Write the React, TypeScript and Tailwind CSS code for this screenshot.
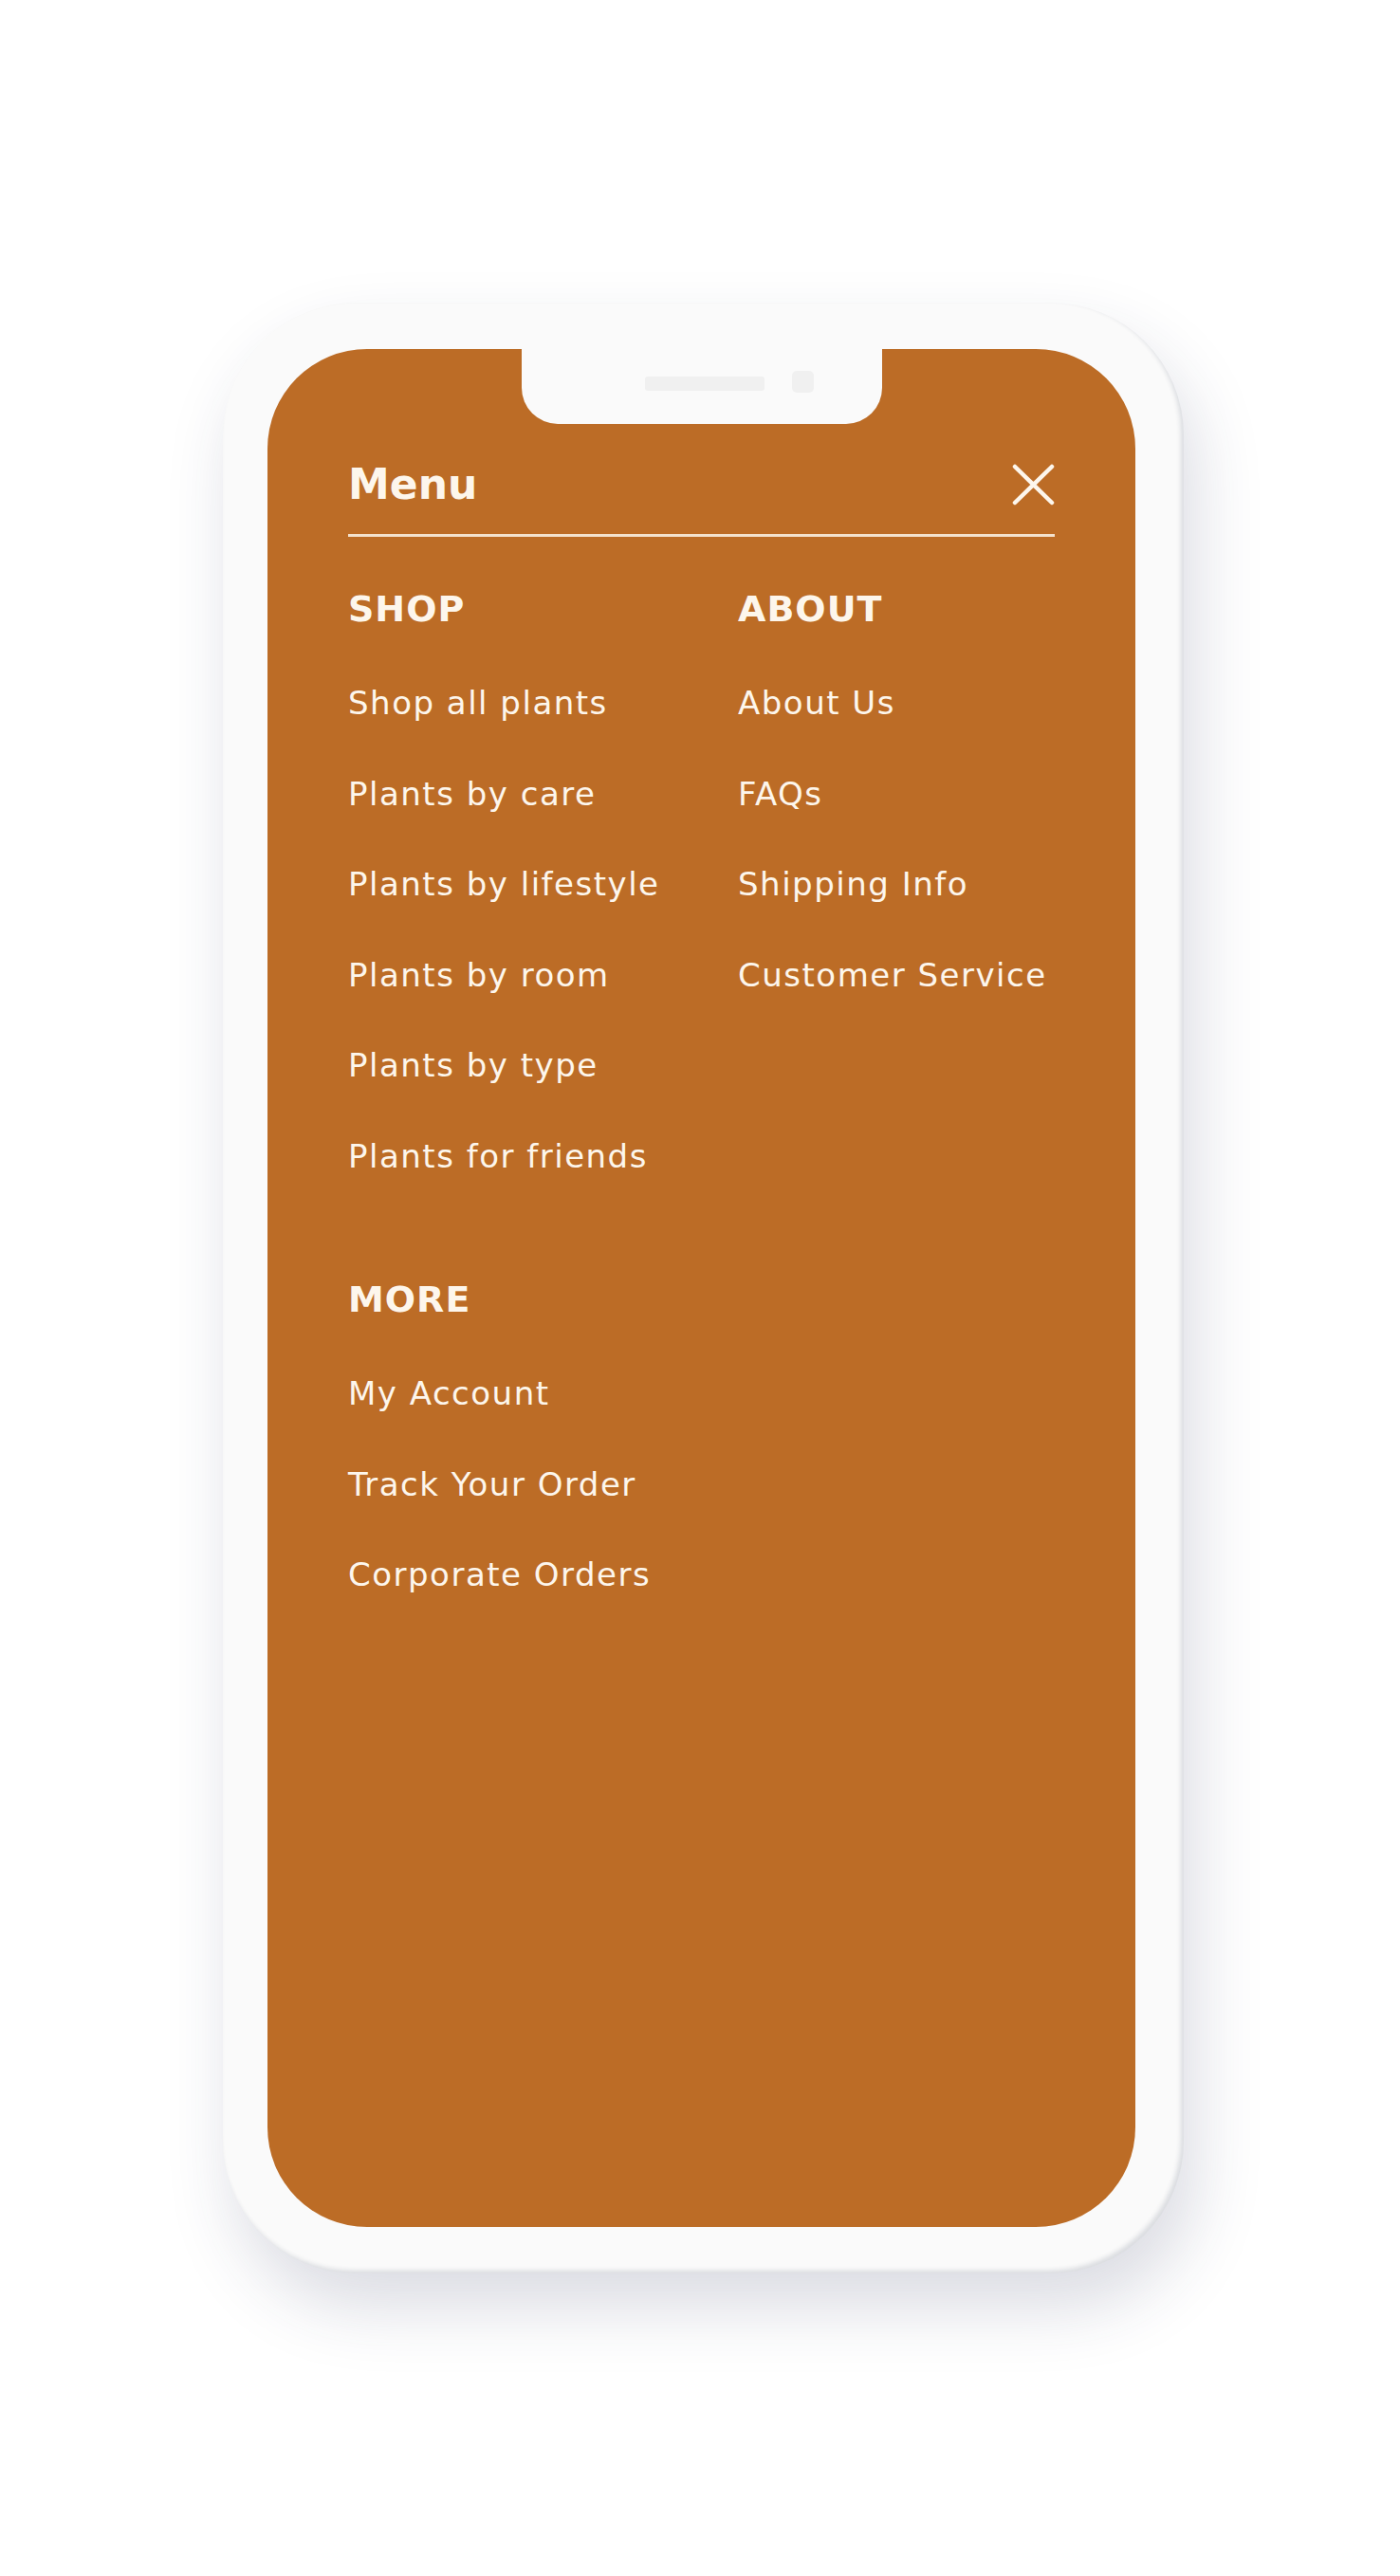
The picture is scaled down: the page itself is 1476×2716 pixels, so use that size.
import React from 'react';

const shop = ['Shop all plants', 'Plants by care', 'Plants by lifestyle', 'Plants by room', 'Plants by type', 'Plants for friends'];
const about = ['About Us', 'FAQs', 'Shipping Info', 'Customer Service'];
const more = ['My Account', 'Track Your Order', 'Corporate Orders'];

function Section({ title, items }: { title: string; items: string[] }) {
  return (
    <div className="flex flex-col">
      <h3 className="text-[38px] font-bold leading-none tracking-[1px]">{title}</h3>
      <ul className="mt-[63px] flex flex-col gap-[61.6px]">
        {items.map((item) => (
          <li key={item} className="text-[34px] leading-[34px] tracking-[1.5px] whitespace-nowrap">
            <a href="#" className="block">{item}</a>
          </li>
        ))}
      </ul>
    </div>
  );
}

export default function App() {
  return (
    <div className="w-full min-h-[2716px] bg-white flex justify-center pt-[319px] pl-[7px]" style={{ fontFamily: '"DejaVu Sans", sans-serif' }}>
      <div className="w-[1013px] h-[2078px] rounded-[140px] bg-[#fafafa] pt-[49px] pl-[47px] pr-[51px] pb-[49px] shadow-[12px_36px_70px_rgba(40,50,90,0.17),inset_-3px_-3px_5px_rgba(30,40,70,0.14)]">
        <div className="relative w-[915px] h-[1980px] rounded-[105px] bg-[#bc6c26] text-[#fdf6ec] px-[85px] pt-[121px]">
          {/* notch */}
          <div className="absolute left-[268px] top-0 w-[380px] h-[79px] bg-[#fafafa] rounded-b-[38px] flex items-start pl-[130px] gap-[29px]">
            <div className="mt-[29px] w-[126px] h-[15px] rounded-[3px] bg-[#f0f0f0]" />
            <div className="mt-[23px] w-[23px] h-[23px] rounded-[5px] bg-[#f0f0f0]" />
          </div>

          <div className="flex items-center justify-between h-[44px]">
            <span className="text-[44px] font-bold leading-none">Menu</span>
            <button type="button" aria-label="Close menu" className="w-[45px] h-[44px]">
              <svg viewBox="0 0 45 44" width="45" height="44" fill="none" stroke="#fdf6ec" strokeWidth="4.5" strokeLinecap="round">
                <path d="M3 3 L42 41 M42 3 L3 41" />
              </svg>
            </button>
          </div>
          <div className="mt-[30px] h-[3px] bg-[#f4e2cd]" />

          <div className="mt-[57px] grid grid-cols-[411px_1fr]">
            <Section title="SHOP" items={shop} />
            <Section title="ABOUT" items={about} />
          </div>

          <div className="mt-[115px]">
            <Section title="MORE" items={more} />
          </div>
        </div>
      </div>
    </div>
  );
}
